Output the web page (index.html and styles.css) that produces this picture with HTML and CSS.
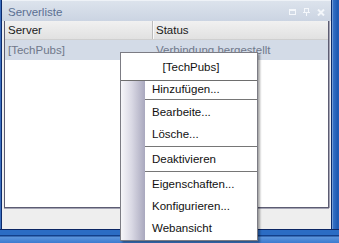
FILE: index.html
```html
<!DOCTYPE html>
<html>
  <head>
    <title>Serverliste</title>
    <meta name="viewport" content="width=device-width, initial-scale=1" />
    <link rel="stylesheet" href="styles.css">
  </head>
  <body>
    <div class="screen">
      <div class="window">
        <div class="edge-left"></div>
        <div class="pane">
          <div class="titlebar">
            <span class="title">Serverliste</span>
            <div class="tools">
              <svg width="7" height="6" viewBox="0 0 7 6">
                <rect x="0.5" y="0.5" width="6" height="5" fill="none" stroke="#f4f7fb" />
                <rect x="0" y="0" width="7" height="2" fill="#f4f7fb" />
              </svg>
              <svg width="7" height="8" viewBox="0 0 7 8">
                <rect x="1.5" y="0.5" width="4" height="4" fill="none" stroke="#f4f7fb" />
                <rect x="0" y="4" width="7" height="1" fill="#f4f7fb" />
                <rect x="3" y="5" width="1" height="3" fill="#f4f7fb" />
              </svg>
              <svg width="8" height="7" viewBox="0 0 8 7">
                <path d="M1 0.5 L7 6.5 M7 0.5 L1 6.5" stroke="#f4f7fb" stroke-width="2" />
              </svg>
            </div>
          </div>
          <div class="list">
            <div class="head">
              <div class="col c1">Server</div>
              <div class="col c2">Status</div>
            </div>
            <div class="row selected">
              <div class="col c1">[TechPubs]</div>
              <div class="col c2">Verbindung hergestellt</div>
            </div>
          </div>
          <div class="footer"></div>
        </div>
        <div class="edge-right"></div>
      </div>
      <div class="taskbar"></div>

      <div class="menu">
        <div class="menu-title">[TechPubs]</div>
        <div class="menu-body">
          <div class="strip"></div>
          <div class="items">
            <div class="item first">Hinzufügen...</div>
            <div class="sep"></div>
            <div class="item">Bearbeite...</div>
            <div class="item">Lösche...</div>
            <div class="sep"></div>
            <div class="item">Deaktivieren</div>
            <div class="sep"></div>
            <div class="item">Eigenschaften...</div>
            <div class="item">Konfigurieren...</div>
            <div class="item">Webansicht</div>
          </div>
        </div>
      </div>
    </div>
  </body>
</html>
```

FILE: styles.css
```css
body {
  margin: 0;
  font-family: "Liberation Sans", Arial, sans-serif;
  font-size: 11.5px;
  background-color: #1f5cb6;
}
.screen {
  position: relative;
  width: 339px;
  height: 243px;
  overflow: hidden;
  display: flex;
  flex-direction: column;
}
.window {
  display: flex;
  height: 230px;
}
.edge-left {
  width: 1px;
  border-left: 1px solid #3c6fc0;
  background-color: #0c2a6a;
}
.pane {
  width: 329px;
  display: flex;
  flex-direction: column;
  background-color: #eeeeee;
}
.edge-right {
  width: 6px;
  border-left: 1px solid #0c2c6e;
  box-shadow: inset 1px 0 0 #6f9ad6;
  background: linear-gradient(to right, #3a76cc, #1d57ae);
}
.titlebar {
  height: 21px;
  display: flex;
  align-items: center;
  justify-content: space-between;
  padding: 0 6px 0 6px;
  background: linear-gradient(#dce3ec, #cbd4e2);
  border-top: 1px solid #eef2f7;
  box-sizing: border-box;
}
.title {
  color: #5b6f92;
  padding-top: 1px;
}
.tools {
  display: flex;
  align-items: center;
  gap: 7px;
  padding-top: 2px;
}
.list {
  height: 186px;
  margin: 0 2px 0 2px;
  background-color: #ffffff;
  border: 1px solid #5c5c72;
  border-top: none;
  box-shadow: 0 1px 0 #a4a4b4, 1px 0 0 #a4a4b4;
}
.head {
  display: flex;
  height: 18px;
  background: linear-gradient(#f1f1f1, #e1e1e1);
  border-bottom: 1px solid #cfcfcf;
}
.head .col {
  color: #1a1a1a;
}
.col {
  display: flex;
  align-items: center;
  padding-left: 3px;
  white-space: nowrap;
}
.c1 {
  width: 144px;
  border-right: 1px solid #bcbcbc;
  box-shadow: 1px 0 0 #fafafa;
}
.c2 {
  flex: 1;
}
.row {
  display: flex;
  height: 20px;
}
.row .c1 {
  border-right: none;
  box-shadow: none;
  width: 145px;
}
.selected {
  background-color: #d3dbe7;
  color: #70788a;
}
.footer {
  flex: 1;
}
.taskbar {
  height: 13px;
  border-top: 1px solid #0b2563;
  background: linear-gradient(#2b6cc4 0, #2b6cc4 5px, #123f8a 5px, #123f8a 6px, #5d95dc 7px, #3c7bd0 13px);
}
.menu {
  position: absolute;
  left: 120px;
  top: 52px;
  width: 136px;
  height: 187px;
  background-color: #ffffff;
  border: 1px solid #7c7c84;
  box-shadow: 2px 2px 2px rgba(0, 0, 0, 0.35);
  display: flex;
  flex-direction: column;
  color: #111111;
}
.menu-title {
  height: 27px;
  display: flex;
  align-items: center;
  justify-content: center;
  border-bottom: 1px solid #6e6e6e;
  padding-left: 4px;
}
.menu-body {
  flex: 1;
  display: flex;
}
.strip {
  width: 24px;
  background: linear-gradient(to right, #f6f6f9, #d9d8e4 45%, #a9a8be);
}
.items {
  flex: 1;
  display: flex;
  flex-direction: column;
}
.item {
  height: 22px;
  display: flex;
  align-items: center;
  padding-left: 7px;
  white-space: nowrap;
}
.item.first {
  height: 17px;
  padding-bottom: 2px;
  box-sizing: border-box;
}
.sep {
  height: 1px;
  margin: 1px 0;
  background-color: #767676;
}
```
